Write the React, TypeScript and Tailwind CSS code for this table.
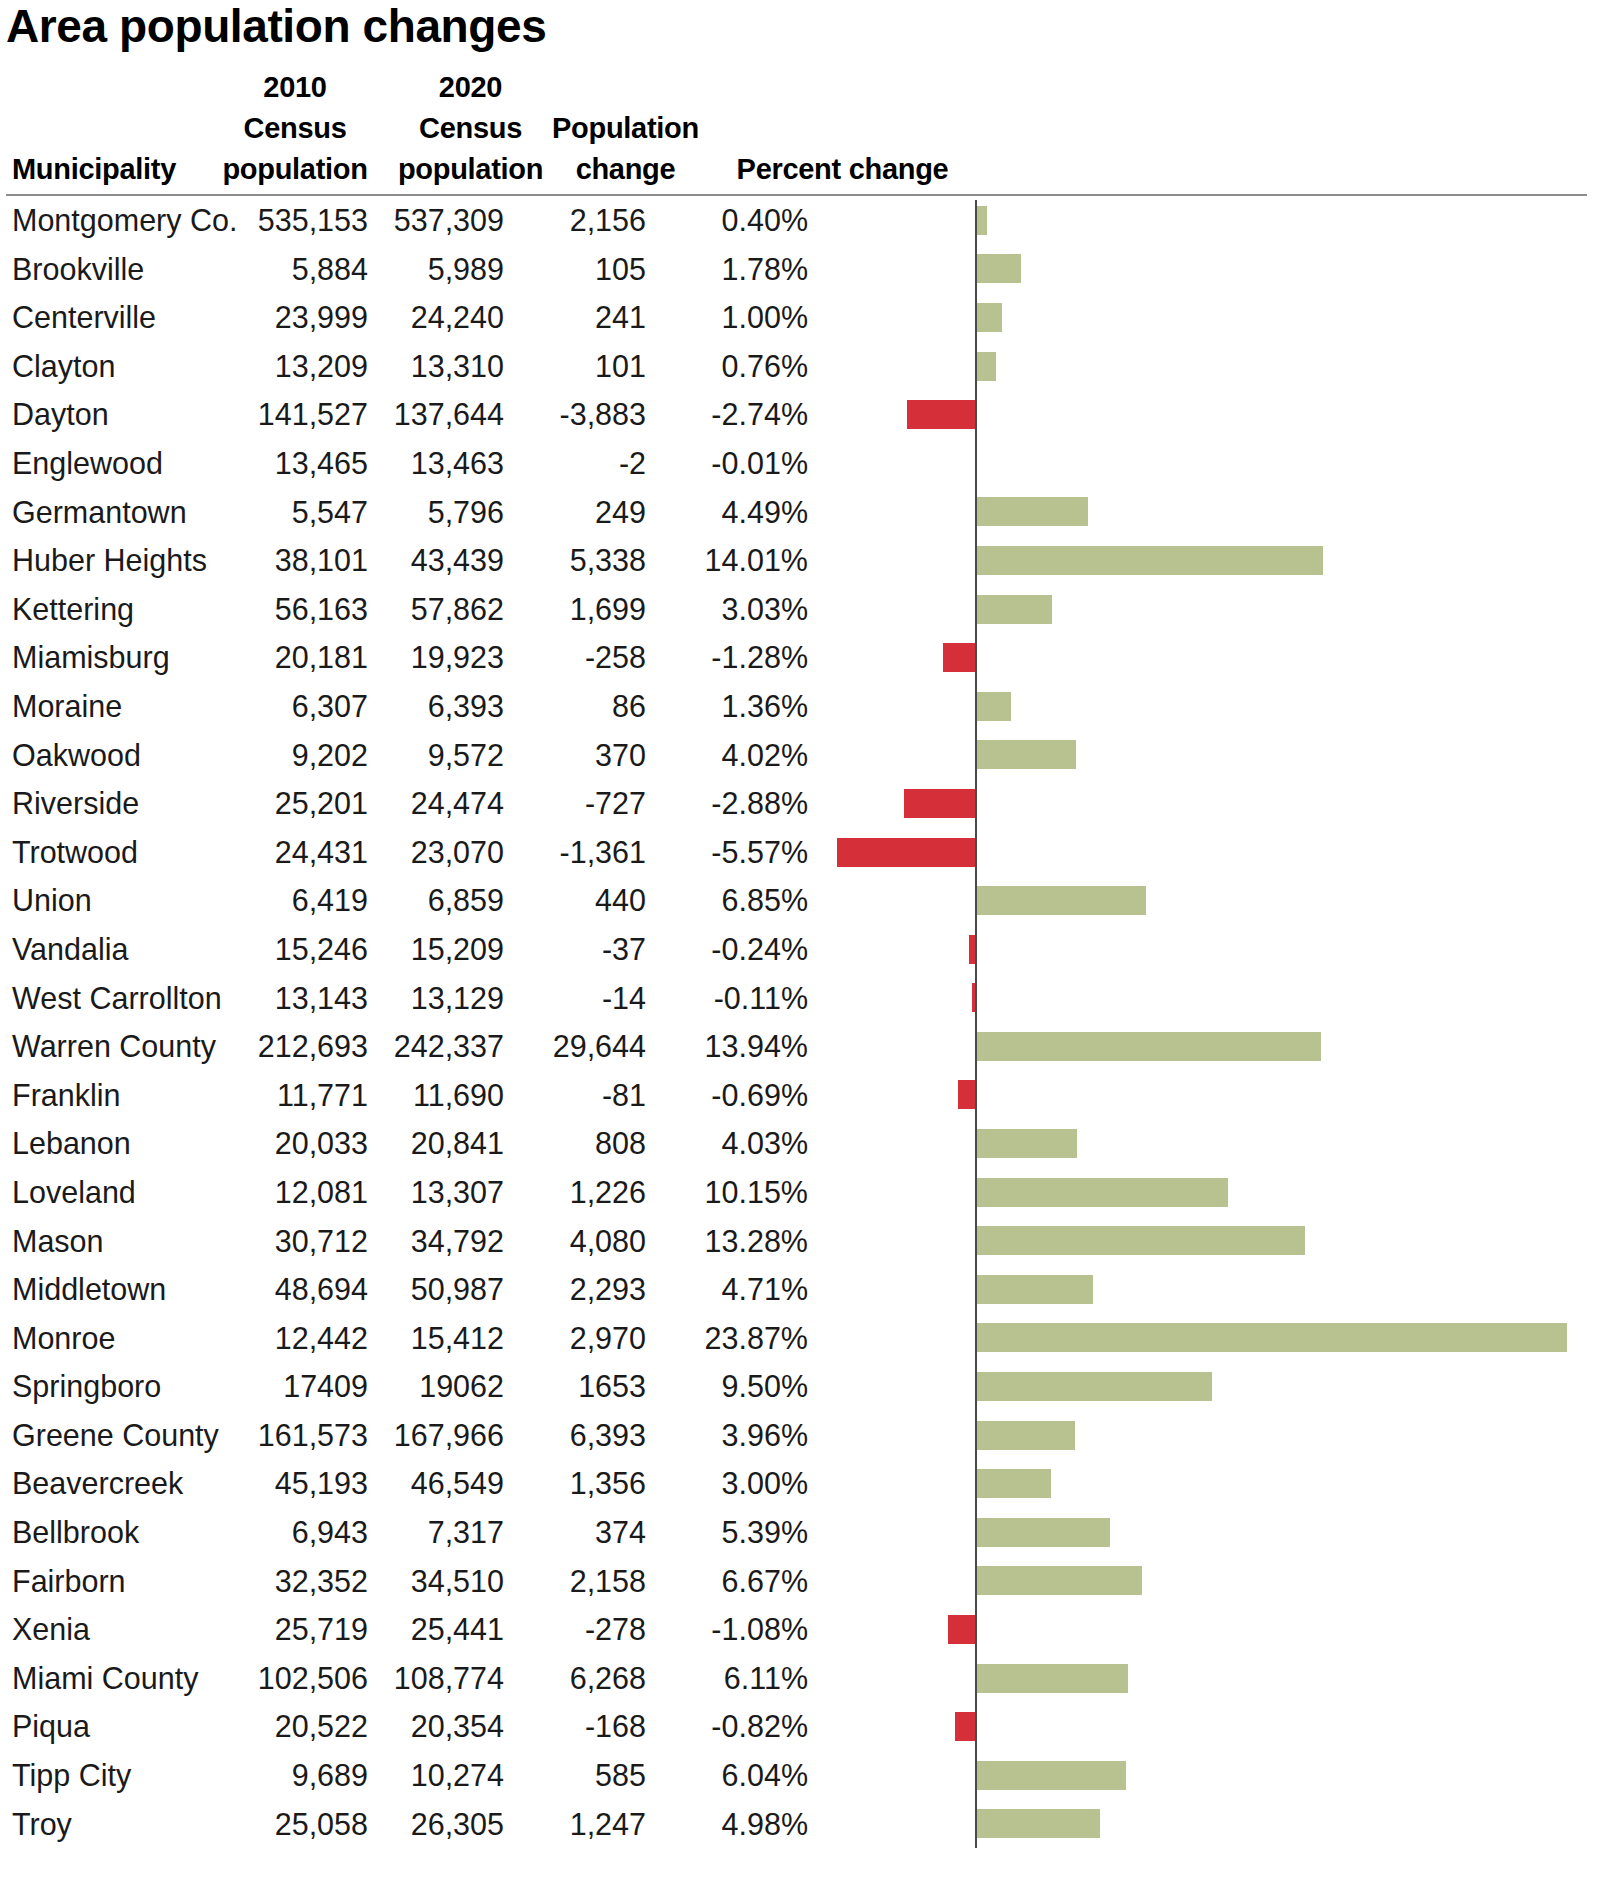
import React from "react";

type Row = {
  name: string;
  pop2010: string;
  pop2020: string;
  change: string;
  pct: string;
  value: number;
};

const rows: Row[] = [
  { name: "Montgomery Co.", pop2010: "535,153", pop2020: "537,309", change: "2,156", pct: "0.40%", value: 0.4 },
  { name: "Brookville", pop2010: "5,884", pop2020: "5,989", change: "105", pct: "1.78%", value: 1.78 },
  { name: "Centerville", pop2010: "23,999", pop2020: "24,240", change: "241", pct: "1.00%", value: 1.0 },
  { name: "Clayton", pop2010: "13,209", pop2020: "13,310", change: "101", pct: "0.76%", value: 0.76 },
  { name: "Dayton", pop2010: "141,527", pop2020: "137,644", change: "-3,883", pct: "-2.74%", value: -2.74 },
  { name: "Englewood", pop2010: "13,465", pop2020: "13,463", change: "-2", pct: "-0.01%", value: -0.01 },
  { name: "Germantown", pop2010: "5,547", pop2020: "5,796", change: "249", pct: "4.49%", value: 4.49 },
  { name: "Huber Heights", pop2010: "38,101", pop2020: "43,439", change: "5,338", pct: "14.01%", value: 14.01 },
  { name: "Kettering", pop2010: "56,163", pop2020: "57,862", change: "1,699", pct: "3.03%", value: 3.03 },
  { name: "Miamisburg", pop2010: "20,181", pop2020: "19,923", change: "-258", pct: "-1.28%", value: -1.28 },
  { name: "Moraine", pop2010: "6,307", pop2020: "6,393", change: "86", pct: "1.36%", value: 1.36 },
  { name: "Oakwood", pop2010: "9,202", pop2020: "9,572", change: "370", pct: "4.02%", value: 4.02 },
  { name: "Riverside", pop2010: "25,201", pop2020: "24,474", change: "-727", pct: "-2.88%", value: -2.88 },
  { name: "Trotwood", pop2010: "24,431", pop2020: "23,070", change: "-1,361", pct: "-5.57%", value: -5.57 },
  { name: "Union", pop2010: "6,419", pop2020: "6,859", change: "440", pct: "6.85%", value: 6.85 },
  { name: "Vandalia", pop2010: "15,246", pop2020: "15,209", change: "-37", pct: "-0.24%", value: -0.24 },
  { name: "West Carrollton", pop2010: "13,143", pop2020: "13,129", change: "-14", pct: "-0.11%", value: -0.11 },
  { name: "Warren County", pop2010: "212,693", pop2020: "242,337", change: "29,644", pct: "13.94%", value: 13.94 },
  { name: "Franklin", pop2010: "11,771", pop2020: "11,690", change: "-81", pct: "-0.69%", value: -0.69 },
  { name: "Lebanon", pop2010: "20,033", pop2020: "20,841", change: "808", pct: "4.03%", value: 4.03 },
  { name: "Loveland", pop2010: "12,081", pop2020: "13,307", change: "1,226", pct: "10.15%", value: 10.15 },
  { name: "Mason", pop2010: "30,712", pop2020: "34,792", change: "4,080", pct: "13.28%", value: 13.28 },
  { name: "Middletown", pop2010: "48,694", pop2020: "50,987", change: "2,293", pct: "4.71%", value: 4.71 },
  { name: "Monroe", pop2010: "12,442", pop2020: "15,412", change: "2,970", pct: "23.87%", value: 23.87 },
  { name: "Springboro", pop2010: "17409", pop2020: "19062", change: "1653", pct: "9.50%", value: 9.5 },
  { name: "Greene County", pop2010: "161,573", pop2020: "167,966", change: "6,393", pct: "3.96%", value: 3.96 },
  { name: "Beavercreek", pop2010: "45,193", pop2020: "46,549", change: "1,356", pct: "3.00%", value: 3.0 },
  { name: "Bellbrook", pop2010: "6,943", pop2020: "7,317", change: "374", pct: "5.39%", value: 5.39 },
  { name: "Fairborn", pop2010: "32,352", pop2020: "34,510", change: "2,158", pct: "6.67%", value: 6.67 },
  { name: "Xenia", pop2010: "25,719", pop2020: "25,441", change: "-278", pct: "-1.08%", value: -1.08 },
  { name: "Miami County", pop2010: "102,506", pop2020: "108,774", change: "6,268", pct: "6.11%", value: 6.11 },
  { name: "Piqua", pop2010: "20,522", pop2020: "20,354", change: "-168", pct: "-0.82%", value: -0.82 },
  { name: "Tipp City", pop2010: "9,689", pop2020: "10,274", change: "585", pct: "6.04%", value: 6.04 },
  { name: "Troy", pop2010: "25,058", pop2020: "26,305", change: "1,247", pct: "4.98%", value: 4.98 },
];

// pixels per percentage point on the bar scale
const PX_PER_PCT = 24.7;

function Bar({ value, first }: { value: number; first: boolean }) {
  const width = Math.abs(value) * PX_PER_PCT;
  return (
    <div className="flex h-full flex-1">
      <div className="flex w-[167px] items-center justify-end">
        {value < 0 && <div className="h-[29px] bg-[#d5303a]" style={{ width }} />}
      </div>
      <div className={`flex flex-1 items-center border-l-2 border-[#4a4a4a] ${first ? "mt-[4px]" : ""}`}>
        {value > 0 && (
          <div className={`h-[29px] bg-[#b8c290] ${first ? "-mt-[4px]" : ""}`} style={{ width }} />
        )}
      </div>
    </div>
  );
}

export default function App() {
  return (
    <div className="min-h-[1888px] bg-white font-['Liberation_Sans',Arial,sans-serif] text-[#1a1a1a]">
      <div className="ml-[6px] w-[1581px]">
        <h1 className="pt-[3px] text-[46px] font-bold leading-none tracking-[-0.4px] text-black">
          Area population changes
        </h1>

        <div className="mt-[18px] flex items-end border-b-2 border-[#8c8c8c] pb-[4px] pl-[6px] text-[29px] font-bold leading-[41px] tracking-[-0.3px] text-black">
          <div className="w-[207px]">Municipality</div>
          <div className="w-[152px] text-center">
            2010
            <br />
            Census
            <br />
            population
          </div>
          <div className="ml-[23px] w-[153px] text-center">
            2020
            <br />
            Census
            <br />
            population
          </div>
          <div className="ml-[3px] w-[151px] text-center">
            Population
            <br />
            change
          </div>
          <div className="ml-[35px] w-[213px] text-center">Percent change</div>
        </div>

        <div className="text-[30.5px] leading-none">
          {rows.map((r, i) => (
            <div key={r.name} className="flex h-[48.6px] items-center">
              <div className="w-[244px] whitespace-nowrap pl-[6px]">{r.name}</div>
              <div className="w-[118px] text-right">{r.pop2010}</div>
              <div className="w-[136px] text-right">{r.pop2020}</div>
              <div className="w-[142px] text-right">{r.change}</div>
              <div className="w-[162px] text-right">{r.pct}</div>
              <Bar value={r.value} first={i === 0} />
            </div>
          ))}
        </div>
      </div>
    </div>
  );
}
